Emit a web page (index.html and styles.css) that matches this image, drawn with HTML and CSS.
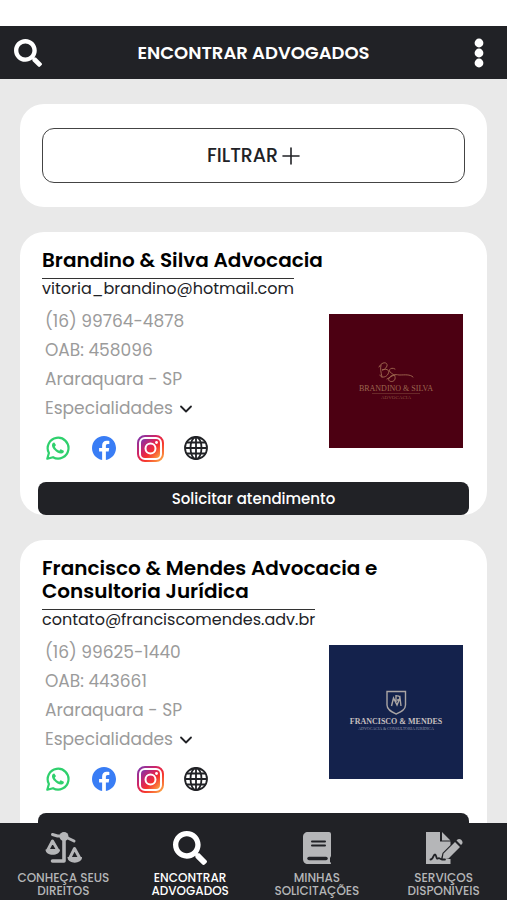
FILE: index.html
```html
<!DOCTYPE html>
<html lang="pt-BR">
<head>
<meta charset="utf-8">
<meta name="viewport" content="width=device-width, initial-scale=1">
<title>Encontrar advogados</title>
<link rel="stylesheet" href="styles.css">
</head>
<body>
<svg class="sprite" aria-hidden="true">
  <symbol id="search" viewBox="0 0 512 512"><path fill="currentColor" d="M505 442.700L405.300 343c-4.500-4.500-10.600-7-17-7H372c27.600-35.300 44-79.700 44-128C416 93.100 322.900 0 208 0S0 93.100 0 208s93.100 208 208 208c48.300 0 92.700-16.400 128-44v16.300c0 6.400 2.500 12.500 7 17l99.700 99.700c9.400 9.400 24.600 9.400 33.900 0l28.300-28.300c9.400-9.400 9.400-24.600.1-34zM208 336c-70.700 0-128-57.200-128-128 0-70.700 57.200-128 128-128 70.700 0 128 57.200 128 128 0 70.700-57.200 128-128 128z"/></symbol>
  <symbol id="chevron" viewBox="0 0 14 10"><path d="M2 2.500l5 5 5-5" fill="none" stroke="#212226" stroke-width="1.800" stroke-linecap="round" stroke-linejoin="round"/></symbol>
  <symbol id="whatsapp" viewBox="0 0 24 24">
    <path d="M1.300 22.700L2.900 17A10.400 10.400 0 1 1 7 21.200z" fill="none" stroke="#2fd06d" stroke-width="2.200" stroke-linejoin="round"/>
    <path d="M8.300 6.500c-.5-.2-1 0-1.400.4-2 2.200-.3 5 1.400 6.900 2.200 2.500 5.500 4.400 8 3.500 1.200-.5 1.800-1.500 1.500-2.600l-2.600-1.300c-.4-.2-.7 0-1 .3l-.9 1.100c-2-.7-3.600-2.100-4.500-4l.9-1.200c.2-.3.200-.5.100-.8z" fill="#2fd06d"/>
  </symbol>
  <symbol id="facebook" viewBox="0 0 16 16"><path fill="#397df5" d="M16 8.050C16 3.600 12.420 0 8 0S0 3.600 0 8.050C0 12.070 2.930 15.400 6.750 16v-5.620H4.720V8.050h2.030V6.280c0-2.020 1.200-3.140 3.020-3.140.88 0 1.790.16 1.790.16v1.980h-1.010c-.99 0-1.300.62-1.300 1.260v1.510h2.220l-.36 2.330H9.250V16C13.070 15.400 16 12.070 16 8.050z"/></symbol>
  <linearGradient id="insta-fill" x1="0" y1="0" x2="1" y2="1"><stop offset="0" stop-color="#7b36b0"/><stop offset=".38" stop-color="#d52461"/><stop offset=".62" stop-color="#f5302e"/><stop offset="1" stop-color="#fdb045"/></linearGradient>
  <symbol id="instagram" viewBox="0 0 27 27">
    <rect x="1" y="1" width="25" height="25" rx="7" fill="none" stroke="url(#insta-fill)" stroke-width="2"/>
    <rect x="4" y="4" width="19" height="19" rx="4" fill="url(#insta-fill)"/>
    <circle cx="13.500" cy="13.500" r="5" fill="none" stroke="#fff" stroke-width="2"/>
    <circle cx="19.500" cy="7.500" r="1.400" fill="#fff"/>
  </symbol>
  <symbol id="globe" viewBox="0 0 24 24"><g fill="none" stroke="#212226" stroke-width="1.800"><circle cx="12" cy="12" r="11"/><ellipse cx="12" cy="12" rx="5.500" ry="11"/><path d="M12 1v22M1 12h22M2.700 6.500h18.600M2.700 17.500h18.600"/></g></symbol>
</svg>

<div class="app">
  <header class="topbar">
    <button class="icon-button" type="button" aria-label="Buscar"><svg width="28" height="28"><use href="#search"/></svg></button>
    <h1>ENCONTRAR ADVOGADOS</h1>
    <button class="icon-button" type="button" aria-label="Menu"><svg width="10" height="30" viewBox="0 0 10 30"><g fill="#fff"><circle cx="5" cy="5" r="4.400"/><circle cx="5" cy="15" r="4.400"/><circle cx="5" cy="25" r="4.400"/></g></svg></button>
  </header>

  <main class="content">
    <section class="card filter-card">
      <button class="filter" type="button">FILTRAR <svg width="18" height="18" viewBox="0 0 18 18"><path d="M9 1v16M1 9h16" stroke="#212226" stroke-width="1.600" stroke-linecap="round"/></svg></button>
    </section>

    <article class="card lawyer">
      <h2>Brandino &amp; Silva Advocacia</h2>
      <a class="email" href="mailto:vitoria_brandino@hotmail.com">vitoria_brandino@hotmail.com</a>
      <div class="body">
        <div class="info">
          <p>(16) 99764-4878</p>
          <p>OAB: 458096</p>
          <p>Araraquara - SP</p>
          <button class="specialties" type="button">Especialidades <svg width="14" height="10"><use href="#chevron"/></svg></button>
          <div class="social">
            <a href="#w1" aria-label="WhatsApp"><svg width="24" height="24"><use href="#whatsapp"/></svg></a>
            <a href="#f1" aria-label="Facebook"><svg width="24" height="24"><use href="#facebook"/></svg></a>
            <a href="#i1" aria-label="Instagram"><svg width="27" height="27"><use href="#instagram"/></svg></a>
            <a href="#s1" aria-label="Site"><svg width="24" height="24"><use href="#globe"/></svg></a>
          </div>
        </div>
        <svg class="logo wine" viewBox="0 0 134 134" role="img" aria-label="Brandino &amp; Silva">
          <g fill="none" stroke="#a06a50" stroke-width=".9" stroke-linecap="round">
            <path d="M53 63c-1-5-2-8-1-12M50 53c3-6 9-5 8-1-1 3-4 4-5 4 6-2 8 1 6 4-2 4-8 4-8 1"/>
            <path d="M66 55c-3-2-7 0-5 3 2 2 6 3 5 7-1 4-8 3-6-1 2-3 6-4 10-3 6 0 11-1 14 2"/>
            <path d="M58 65c3-1 5-4 8-4"/>
          </g>
          <text x="67" y="77" class="wine-name">BRANDINO &amp; SILVA</text>
          <path d="M43 79.500h48" stroke="#87503f" stroke-width=".5"/>
          <text x="67" y="85" class="wine-sub">ADVOCACIA</text>
        </svg>
      </div>
      <button class="request" type="button">Solicitar atendimento</button>
    </article>

    <article class="card lawyer">
      <h2>Francisco &amp; Mendes Advocacia e Consultoria Jurídica</h2>
      <a class="email" href="mailto:contato@franciscomendes.adv.br">contato@franciscomendes.adv.br</a>
      <div class="body">
        <div class="info">
          <p>(16) 99625-1440</p>
          <p>OAB: 443661</p>
          <p>Araraquara - SP</p>
          <button class="specialties" type="button">Especialidades <svg width="14" height="10"><use href="#chevron"/></svg></button>
          <div class="social">
            <a href="#w2" aria-label="WhatsApp"><svg width="24" height="24"><use href="#whatsapp"/></svg></a>
            <a href="#f2" aria-label="Facebook"><svg width="24" height="24"><use href="#facebook"/></svg></a>
            <a href="#i2" aria-label="Instagram"><svg width="27" height="27"><use href="#instagram"/></svg></a>
            <a href="#s2" aria-label="Site"><svg width="24" height="24"><use href="#globe"/></svg></a>
          </div>
        </div>
        <svg class="logo navy" viewBox="0 0 134 134" role="img" aria-label="Francisco &amp; Mendes">
          <g fill="none" stroke="#aaa5a4">
            <path d="M58 46.500h18.500V60c0 5-5 7-9.300 9C63 67 58 65 58 60z" stroke-width="1.400"/>
            <path d="M62.500 61l2-8 3.500 7 3-7 1 8M67 50v7M67 51c5-1 5 4 1 4" stroke-width="1.400"/>
          </g>
          <text x="67" y="79" class="navy-name">FRANCISCO &amp; MENDES</text>
          <text x="67" y="85" class="navy-sub">ADVOCACIA &amp; CONSULTORIA JURÍDICA</text>
        </svg>
      </div>
      <button class="request" type="button">Solicitar atendimento</button>
    </article>
  </main>

  <nav class="tabs">
    <a href="#direitos">
      <svg width="38" height="34" viewBox="0 0 38 34"><g fill="none" stroke="currentColor" stroke-linejoin="round" stroke-linecap="round"><path d="M8.500 3.500l5 1.500h6l10.500 5" stroke-width="3"/><path d="M20 5v25H8.500" stroke-width="3.600"/><path d="M8.500 10L3.500 19.500h10.500zM30.500 17.500l-5 10h10.500z" stroke-width="3"/></g><circle cx="20" cy="5.500" r="4.500" fill="currentColor"/><path fill="currentColor" d="M1.500 18.500H16c0 7-14.500 7-14.500 0zM23.500 26H38c0 7.500-14.500 7.500-14.500 0z"/></svg>
      <span>CONHEÇA SEUS<br>DIREITOS</span>
    </a>
    <a href="#advogados" class="active" aria-current="page">
      <svg width="34" height="34"><use href="#search"/></svg>
      <span>ENCONTRAR<br>ADVOGADOS</span>
    </a>
    <a href="#solicitacoes">
      <svg width="30" height="34" viewBox="0 0 30 34"><path fill="currentColor" d="M6 1h21a2 2 0 0 1 2 2v22l-1 2v4q1 0 1 2H6c-3 0-5-2-5-5V6c0-3 2-5 5-5z"/><path d="M10 10.500h13M10 14.500h13" fill="none" stroke="#212226" stroke-width="2" stroke-linecap="round"/><path d="M7 27.500h17" stroke="#212226" stroke-width="3.500" stroke-linecap="round"/></svg>
      <span>MINHAS<br>SOLICITAÇÕES</span>
    </a>
    <a href="#servicos">
      <svg width="38" height="34" viewBox="0 0 38 34"><path fill="currentColor" d="M1 1h14v9.500h10.500V14l-8 8-1.500 6h9.500v5H1zM17 1l8.500 8.500H17zM18.500 22.500L30 11l5 5-11.500 11.500-6 1z"/><path fill="currentColor" d="M31.500 9.500l1-1c2.500-2 6.500 2 4.500 4.500l-1 1z"/><path d="M5.500 28.500c3 0 2.500-5 4.500-5 1.500 0 1 5 3 4 1.500-1.500 2 1 4 1h3" fill="none" stroke="#212226" stroke-width="1.800" stroke-linecap="round"/></svg>
      <span>SERVIÇOS<br>DISPONÍVEIS</span>
    </a>
  </nav>
</div>
</body>
</html>
```
FILE: styles.css
```css
* { box-sizing: border-box; }

body {
  margin: 0;
  background: #fff;
  color: #212226;
  font-family: Poppins, Inter, "Liberation Sans", sans-serif;
}

h1, h2, p { margin: 0; }
a { color: inherit; text-decoration: none; }
svg { display: block; flex: none; }

button {
  padding: 0;
  border: 0;
  background: none;
  color: inherit;
  font: inherit;
  cursor: pointer;
}

.sprite { position: absolute; width: 0; height: 0; }

.app {
  display: flex;
  flex-direction: column;
  height: 100vh;
  padding-top: 26px;
}

.topbar {
  display: flex;
  flex: none;
  align-items: center;
  justify-content: space-between;
  height: 53px;
  padding: 0 14px;
  background: #212226;
  color: #fff;
}

.topbar h1 { font-size: 18px; font-weight: 600; }

.icon-button { display: flex; width: 28px; }
.icon-button:last-child { justify-content: center; }

.content {
  display: flex;
  flex: 1;
  flex-direction: column;
  gap: 25px;
  min-height: 0;
  padding: 25px 20px;
  overflow: hidden;
  background: #e9e9e9;
}

.card {
  flex: none;
  border-radius: 24px;
  background: #fff;
}

.filter-card { padding: 24px 22px; }

.filter {
  display: flex;
  align-items: center;
  justify-content: center;
  gap: 4px;
  width: 100%;
  height: 55px;
  border: 1px solid #444;
  border-radius: 12px;
  font-size: 19px;
  font-weight: 500;
}

.lawyer { padding: 17px 18px 0; }

.lawyer h2 {
  padding: 0 4px;
  color: #000;
  font-size: 20px;
  font-weight: 600;
  line-height: 23px;
}

.email {
  display: block;
  width: fit-content;
  margin: 6px 4px 0;
  border-top: 1px solid #333;
  font-size: 16px;
  line-height: 19px;
}

.body {
  display: flex;
  align-items: flex-start;
  justify-content: space-between;
  padding: 9px 6px 0 7px;
}

.info {
  color: #9b9b9b;
  font-size: 17px;
  line-height: 29px;
}

.specialties {
  display: flex;
  align-items: center;
  gap: 6px;
}

.social {
  display: flex;
  align-items: center;
  gap: 20px;
  height: 28px;
  margin: 11px 0 20px;
}

.social a {
  display: flex;
  justify-content: center;
  width: 26px;
}

.logo {
  width: 134px;
  height: 134px;
  margin-top: 7px;
}

.wine { background: #4c0012; }
.navy { background: #14224c; }

.logo text {
  font-family: "Liberation Serif", serif;
  text-anchor: middle;
}

.wine-name { fill: #9b6750; font-size: 8px; }
.wine-sub { fill: #87503f; font-size: 5px; }
.navy-name { fill: #c5bfbf; font-size: 8px; font-weight: 700; }
.navy-sub { fill: #9195a7; font-size: 4px; }

.request {
  width: 100%;
  height: 33px;
  border-radius: 8px;
  background: #212226;
  color: #fff;
  font-size: 15px;
  font-weight: 500;
}

.tabs {
  display: grid;
  flex: none;
  grid-template-columns: repeat(4, 1fr);
  height: 77px;
  background: #212226;
  color: #b5b6b8;
}

.tabs a {
  display: flex;
  flex-direction: column;
  align-items: center;
  gap: 6px;
  padding-top: 8px;
  font-size: 12px;
  font-weight: 500;
  line-height: 13px;
  text-align: center;
}

.tabs .active { color: #fff; }
```
